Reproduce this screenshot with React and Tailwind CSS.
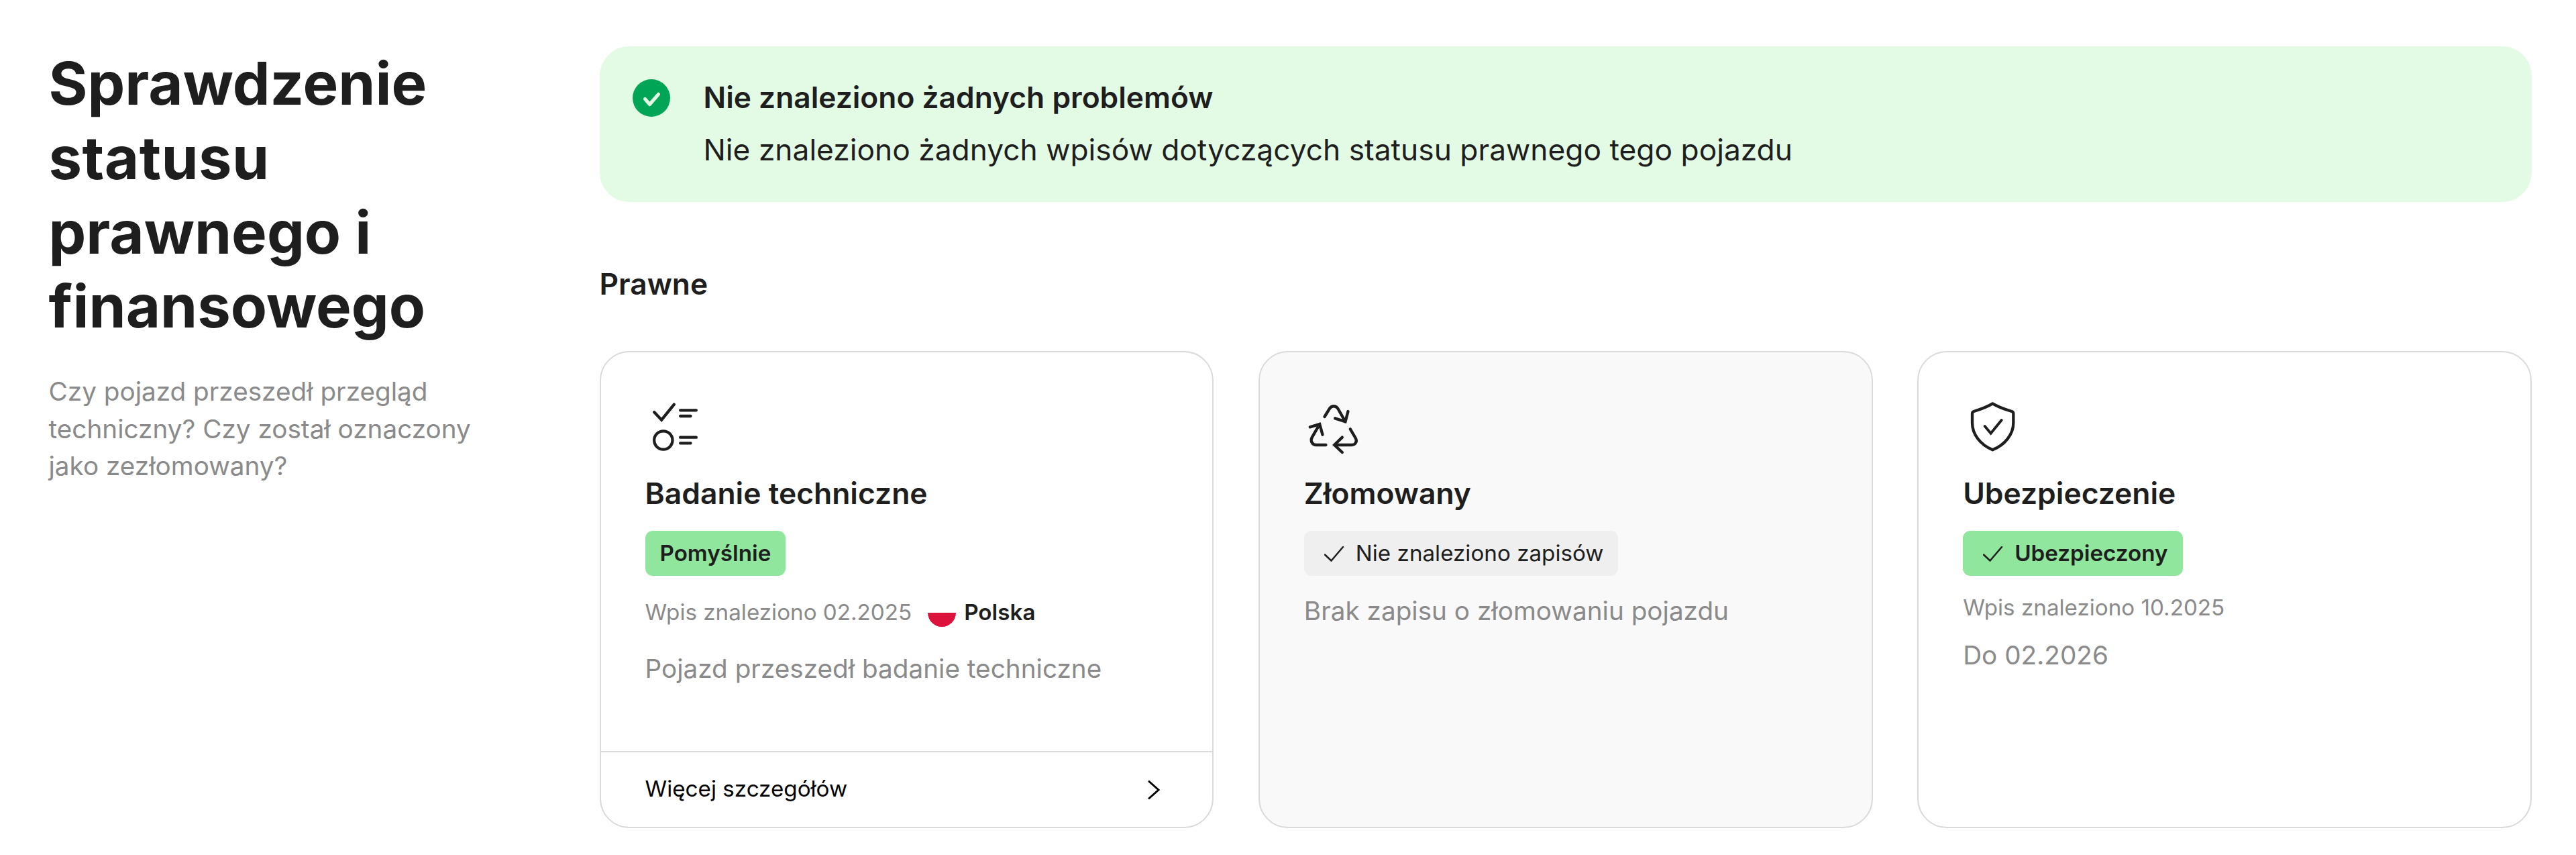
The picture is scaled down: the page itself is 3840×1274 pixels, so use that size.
const CARD = 'flex h-[711px] flex-1 flex-col overflow-hidden rounded-[44px] border-2 border-[#dadada]';

function ChecklistIcon() {
  return (
    <svg viewBox="64.5 33 264 264" className="size-22" fill="none" stroke="#1e1e1e" strokeWidth="13" strokeLinecap="round">
      <path d="M104 102l33 35 56-69" strokeLinejoin="miter" />
      <circle cx="145" cy="228" r="41" />
      <path d="M221 94h71M221 120h46M221 215h71M221 241h46" />
    </svg>
  );
}

function RecycleIcon() {
  return (
    <svg viewBox="41.5 33 264 264" className="size-22" fill="none" stroke="#1e1e1e" strokeWidth="13" strokeLinecap="round">
      <path d="M133 123l22-36c9-15 29-15 38 0l33 58M180 130l46 15 12-46" />
      <path d="M139 249H96c-18 0-28-18-19-34l34-59M68 169l43-13 13 47" />
      <path d="M248 178l24 41c8 14-1 30-18 30h-77M212 215l-35 34 35 33" />
    </svg>
  );
}

function ShieldIcon() {
  return (
    <svg viewBox="48 33 264 264" className="size-22" fill="none" stroke="#1e1e1e" strokeLinecap="round">
      <path strokeWidth="13" strokeLinejoin="round" d="M181 64c26 16 52 25 86 35q7 2 7 10v41c0 52-38 98-93 121-55-23-91-69-91-121v-41q0-8 7-10c32-10 58-19 84-35z" />
      <path strokeWidth="12" d="M146 165l27 32 48-59" />
    </svg>
  );
}

function Tick() {
  return (
    <svg viewBox="0 0 30 24" className="mx-2 h-6 w-[30px]" fill="none" stroke="#1e1e1e" strokeWidth="2.5" strokeLinecap="round">
      <path d="M1 13.500l9.500 9L28 2" />
    </svg>
  );
}

function Badge({ children, tick, tone }) {
  return (
    <div className={`mt-[21px] flex h-[67px] items-center self-start rounded-[11px] px-[22px] text-[33.2px] ${tone}`}>
      {tick && <span className="mr-[9px] flex"><Tick /></span>}
      <span>{children}</span>
    </div>
  );
}

function Card({ icon, title, badge, tick, tone, muted, footer, children }) {
  return (
    <article className={`${CARD} ${muted ? 'bg-[#f9f9f9]' : 'bg-white'}`}>
      <div className="flex flex-1 flex-col px-[66px] pt-[66px]">
        {icon}
        <h3 className="mt-[22px] text-[44.4px] leading-[69px] font-semibold">{title}</h3>
        <Badge tick={tick} tone={tone}>{badge}</Badge>
        {children}
      </div>
      {footer}
    </article>
  );
}

export default function App() {
  return (
    <main className="flex h-[1274px] w-[3840px] bg-white pt-[69px] pl-[72.500px] font-[Inter,sans-serif] text-[#1e1e1e]">
      <aside className="w-[821px] shrink-0">
        <h1 className="w-[700px] text-[88.6px] leading-[110.8px] font-bold">
          Sprawdzenie<br />
          <span className="tracking-[0.4px]">statusu</span><br />
          prawnego i<br />finansowego
        </h1>
        <p className="mt-[44px] text-[38.7px] leading-[55.4px] text-[#8a8a8a]">
          Czy pojazd przeszedł przegląd<br />techniczny? Czy został oznaczony<br />jako zezłomowany?
        </p>
      </aside>
      <section className="w-[2880.5px]">
        <div className="flex h-[232px] rounded-[44px] bg-[#e3fbe5] pt-[38px] pl-[49px]">
          <svg viewBox="0 0 56 56" className="mt-[11px] size-14" fill="none">
            <circle cx="28" cy="28" r="28" fill="#00a656" />
            <path d="M18.500 29.500l7 8L38.500 22.500" stroke="#e3fbe5" strokeWidth="5" strokeLinecap="round" strokeLinejoin="round" />
          </svg>
          <div className="ml-[50px] text-[44.3px] leading-[77.6px]">
            <h2 className="font-semibold">Nie znaleziono żadnych problemów</h2>
            <p>Nie znaleziono żadnych wpisów dotyczących statusu prawnego tego pojazdu</p>
          </div>
        </div>
        <h2 className="mt-[91px] text-[44.3px] leading-[62px] font-semibold">Prawne</h2>
        <div className="mt-[69px] flex gap-[66.500px]">
          <Card
            icon={<ChecklistIcon />}
            title="Badanie techniczne"
            badge="Pomyślnie"
            tone="bg-[#8fe69c] font-semibold"
            footer={
              <div className="flex h-[113px] items-center border-t-2 border-[#dadada] pr-[77px] pl-[66px] text-[33.2px] text-black">
                <span className="flex-1 pb-0.5">Więcej szczegółów</span>
                <svg viewBox="0 0 20 28" className="h-7 w-5" fill="none" stroke="#000" strokeWidth="3" strokeLinecap="round">
                  <path d="M3 1.500L17 14 3 26.500" />
                </svg>
              </div>
            }
          >
            <div className="mt-[28px] flex h-[54px] items-center text-[33.2px]">
              <span className="text-[#8a8a8a]">Wpis znaleziono 02.2025</span>
              <svg viewBox="0 0 42 42" className="mr-[12px] ml-[24px] size-[42px]">
                <path d="M0 21h42a21 21 0 0 1-42 0z" fill="#dc143c" />
              </svg>
              <span className="font-semibold">Polska</span>
            </div>
            <p className="mt-[29px] text-[38.7px] leading-[55.4px] text-[#8a8a8a]">Pojazd przeszedł badanie techniczne</p>
          </Card>
          <Card icon={<RecycleIcon />} title="Złomowany" badge="Nie znaleziono zapisów" tone="bg-[#efefef]" tick muted>
            <p className="mt-[25px] text-[38.7px] leading-[55.4px] text-[#8a8a8a]">Brak zapisu o złomowaniu pojazdu</p>
          </Card>
          <Card icon={<ShieldIcon />} title="Ubezpieczenie" badge="Ubezpieczony" tone="bg-[#8fe69c] font-semibold" tick>
            <p className="mt-[22px] text-[33.2px] leading-[50px] text-[#8a8a8a]">Wpis znaleziono 10.2025</p>
            <p className="mt-[19px] text-[38.7px] leading-[55.4px] text-[#8a8a8a]">Do 02.2026</p>
          </Card>
        </div>
      </section>
    </main>
  );
}
